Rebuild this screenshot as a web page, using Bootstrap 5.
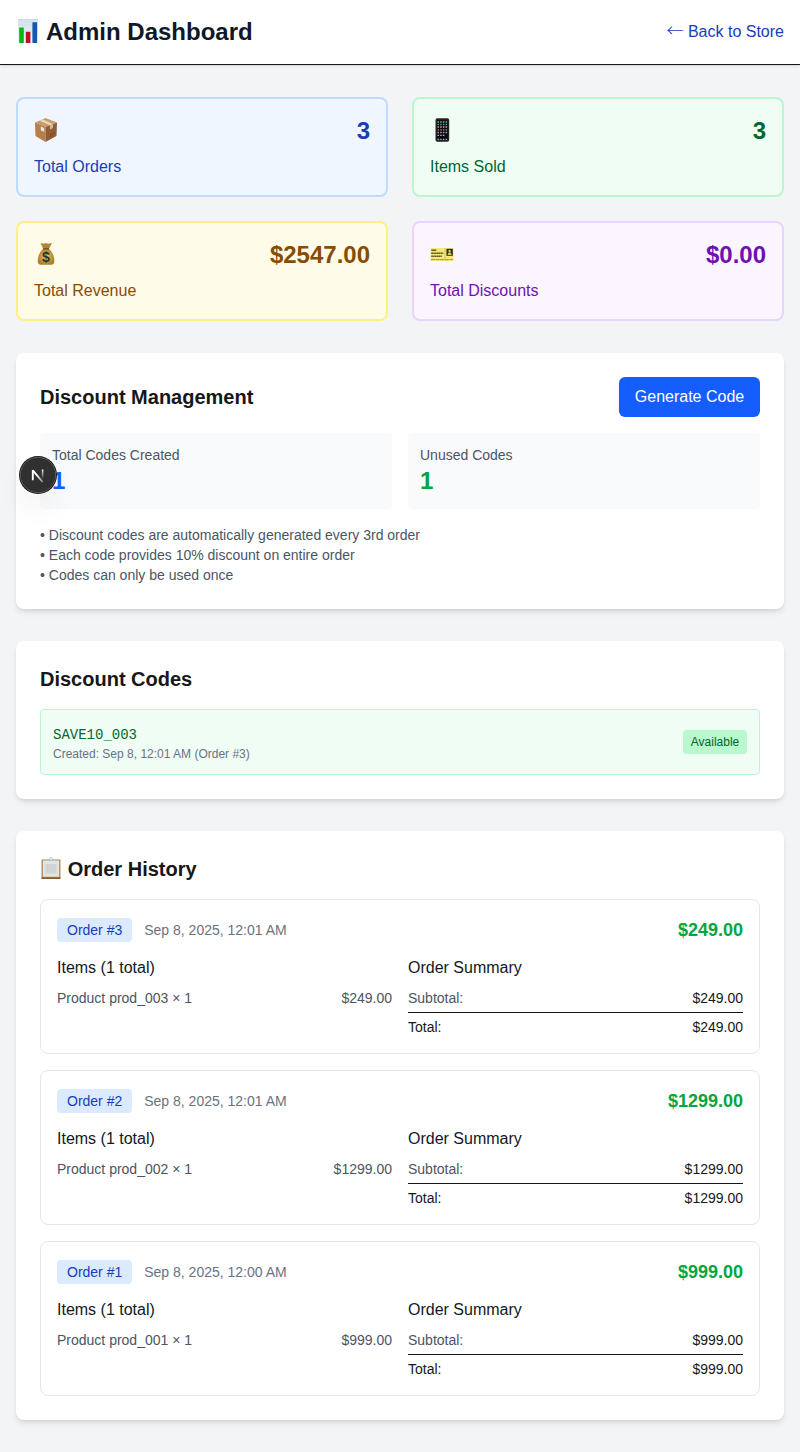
<!DOCTYPE html>
<html lang="en">
<head>
<meta charset="utf-8">
<meta name="viewport" content="width=device-width, initial-scale=1">
<title>Admin Dashboard</title>
<link href="https://cdn.jsdelivr.net/npm/bootstrap@5.3.0/dist/css/bootstrap.min.css" rel="stylesheet">
<style>
body{font-family:"Liberation Sans",Arial,sans-serif;font-size:16px;line-height:24px;background:#f3f4f6;color:#171717}
h1,h2,h3{margin:0;font-weight:700}
h1{font-size:24px;line-height:32px;color:#101828}
h2{font-size:20px;line-height:28px}
h3{font-size:16px;line-height:24px;font-weight:400;color:#101828}
.topbar{height:65px;border-bottom:1px solid #171717;box-shadow:0 1px 3px rgba(0,0,0,.1),0 1px 2px -1px rgba(0,0,0,.1)}
.back-link{color:#193cb8}
.back-arrow{font-family:"Noto Sans CJK JP",sans-serif;font-size:17px;font-weight:300;line-height:1}
.page-main{padding:32px 16px}
.stack-lg{gap:32px}
.stat{border:2px solid;border-radius:8px;padding:16px}
.stat svg,.topbar h1 svg{margin-bottom:2px}
.stat-value{font-size:24px;line-height:32px;font-weight:700}
.stat-blue{background:#eff6ff;border-color:#bedbff;color:#193cb8}
.stat-green{background:#f0fdf4;border-color:#b9f8cf;color:#016630}
.stat-yellow{background:#fefce8;border-color:#fff085;color:#894b00}
.stat-purple{background:#faf5ff;border-color:#e9d4ff;color:#6e11b0}
.panel{background:#fff;border-radius:8px;padding:24px;box-shadow:0 4px 6px -1px rgba(0,0,0,.1),0 2px 4px -2px rgba(0,0,0,.1)}
.btn-generate{--bs-btn-bg:#155dfc;--bs-btn-color:#fff;--bs-btn-hover-bg:#1447e6;--bs-btn-hover-color:#fff;--bs-btn-padding-x:0;--bs-btn-padding-y:8px;--bs-btn-border-width:0;--bs-btn-border-radius:6px;--bs-btn-font-size:16px;line-height:24px;width:141px;white-space:nowrap}
.metric{background:#f9fafb;border-radius:4px;padding:12px}
.text-sm14{font-size:14px;line-height:20px}
.text-xs12{font-size:12px;line-height:16px}
.c-slate{color:#4a5565}.c-muted{color:#6a7282}.c-green{color:#00a63e}.c-blue{color:#155dfc}
.code-row{background:#f0fdf4;border:1px solid #b9f8cf;border-radius:4px;padding:12px}
.code-name{font-family:"Liberation Mono",monospace;font-size:14px;line-height:22px;padding-top:2px;color:#016630}
.pill-ok{background:#b9f8cf;color:#016630;border-radius:4px;padding:4px 0;width:64px;text-align:center}
.order{border:1px solid #e5e7eb;border-radius:8px;padding:16px}
.order-head{margin-bottom:12px}
.order-no{background:#dbeafe;color:#193cb8;border-radius:4px;padding:2px 10px}
.order-sum{font-size:18px;line-height:28px;font-weight:700}
.total-line{border-top:1px solid #171717;padding-top:4px;margin-top:4px}
.dev-badge{position:fixed;left:19px;top:456px;width:38px;height:38px;border-radius:50%;box-shadow:0 16px 32px -8px rgba(0,0,0,.14)}
svg{display:block;flex:none}
</style>
</head>
<body>
<header class="topbar bg-white d-flex align-items-center justify-content-between px-3">
  <h1 class="d-flex align-items-center">
    <svg class="me-2" width="22" height="24" viewBox="0 0 22 24"><defs><linearGradient id="sky" x2="0" y2="1"><stop stop-color="#d3e0ed"/><stop offset="1" stop-color="#f4f7fa"/></linearGradient></defs><path fill="url(#sky)" d="M2 0h20v24H2z"/><path d="M2 .5h20M2 6h20M2 12h20" stroke="#c7d5e3" stroke-width=".5"/><path fill="#08b514" d="M3.200 8.500h4.600V24H3.200z"/><path fill="#bd1220" d="M9.800 12.800h4.600V24H9.800z"/><path fill="#1459b8" d="M16.400 3.200h4.700V24h-4.700z"/></svg>
    <span>Admin Dashboard</span></h1>
  <a class="back-link text-decoration-none" href="#"><span class="back-arrow">←</span> Back to Store</a>
</header>
<main class="page-main d-flex flex-column stack-lg">
  <section class="row g-4">
    <div class="col-6"><div class="stat stat-blue">
      <div class="d-flex justify-content-between align-items-center mb-2">
        <svg width="24" height="24" viewBox="0 0 24 24"><path fill="#b77d4b" d="m1 4.500 10.500 4.300V24L1.500 18z"/><path fill="#925d34" d="M11.500 8.800 23 4.500 22.500 18l-11 6z"/><path fill="#c99b6c" d="M1 4.500 11.500 0 23 4.500 11.500 9z"/><path fill="#e8d5b9" d="m5.500 2.700 3-1.400 10.500 4.800-3 1.200z"/><path fill="#d5b58e" d="m16 7.300 3-1.200v4l-3 1.400z"/><path fill="#e6e5df" d="m6.800 8.500 3.400 1.500v4l-3.400-1.700z"/><path d="m16 17 5-2.400m-4.500 4 2-1" stroke="#62401f" stroke-width=".8"/></svg>
        <span class="stat-value">3</span></div>
      <div>Total Orders</div></div></div>
    <div class="col-6"><div class="stat stat-green">
      <div class="d-flex justify-content-between align-items-center mb-2">
        <svg width="24" height="24" viewBox="0 0 24 24"><rect x="5.500" y=".2" width="13.700" height="23.600" rx="1.800" fill="#222"/><path fill="#090a0e" d="M7 2.400h10.700v19H7z"/><g stroke-width="1.300" stroke-dasharray="1.500 1.200"><path stroke="#6bc579" d="M7.500 4h10"/><path stroke="#3a9bd4" d="M7.500 6.500h10"/><path stroke="#e6ad69" d="M7.500 9h10"/><path stroke="#db7950" d="M7.500 11.800h10"/><path stroke="#a89bc4" d="M7.500 14.500h10"/><path stroke="#b8b6a7" d="M7.500 17.300h8"/><path stroke="#5cc7c2" d="M7.500 21.300h10"/></g></svg>
        <span class="stat-value">3</span></div>
      <div>Items Sold</div></div></div>
    <div class="col-6"><div class="stat stat-yellow">
      <div class="d-flex justify-content-between align-items-center mb-2">
        <svg width="24" height="24" viewBox="0 0 24 24"><defs><radialGradient id="gold"><stop stop-color="#edcb5f"/><stop offset="1" stop-color="#ad802d"/></radialGradient></defs><path fill="#b38336" d="m6.500 1 3.500.8L12 1l2 .8 4-.8-3.200 6H9.300z"/><path fill="url(#gold)" d="M9.500 6.500h5C18 9.500 20.700 14 20.300 20q-.4 2.700-3 2.700H7Q4 22.700 3.800 20C3.500 14 6 9.500 9.500 6.500z"/><path d="M9 6.800h6" stroke="#754b20" stroke-width="1.300"/><text x="12" y="19.700" text-anchor="middle" font-family="Liberation Sans" font-weight="700" font-size="14" fill="#292f35">$</text></svg>
        <span class="stat-value">$2547.00</span></div>
      <div>Total Revenue</div></div></div>
    <div class="col-6"><div class="stat stat-purple">
      <div class="d-flex justify-content-between align-items-center mb-2">
        <svg width="24" height="24" viewBox="0 0 24 24"><path fill="#f6e875" d="M.5 6h23v13H.5z"/><g stroke="#59552b" stroke-width="1.400"><path d="M1.300 8.200h5"/><path d="M1.300 11.200h12" stroke-dasharray="1.600 .3"/><path d="M1.300 14.200h10.500" stroke-dasharray="1.600 .3"/></g><path stroke="#a0964a" stroke-width="1" stroke-dasharray="4 .6" d="M1 17.600h22"/><path stroke="#b6ab58" stroke-width=".6" d="M15 6v13"/><path fill="#29291d" d="M16.500 6.800h6.300v7h-6.300z"/><circle cx="19.600" cy="9" r="1.200" fill="#d6ca68"/><path fill="#d6ca68" d="m17.500 13 1-2.500h2.200l1 2.500z"/></svg>
        <span class="stat-value">$0.00</span></div>
      <div>Total Discounts</div></div></div>
  </section>

  <section class="panel">
    <div class="d-flex justify-content-between align-items-center mb-3">
      <h2>Discount Management</h2><button class="btn btn-generate" type="button">Generate Code</button></div>
    <div class="row gx-3 mb-3">
      <div class="col-6"><div class="metric"><div class="text-sm14 c-slate">Total Codes Created</div><div class="stat-value c-blue">1</div></div></div>
      <div class="col-6"><div class="metric"><div class="text-sm14 c-slate">Unused Codes</div><div class="stat-value c-green">1</div></div></div>
    </div>
    <div class="text-sm14 c-slate"><div>• Discount codes are automatically generated every 3rd order</div><div>• Each code provides 10% discount on entire order</div><div>• Codes can only be used once</div></div>
  </section>

  <section class="panel">
    <h2 class="mb-3">Discount Codes</h2>
    <div class="code-row d-flex justify-content-between align-items-center">
      <div><div class="code-name">SAVE10_003</div><div class="text-xs12 c-muted">Created: Sep 8, 12:01 AM (Order #3)</div></div>
      <span class="pill-ok text-xs12">Available</span>
    </div>
  </section>

  <section class="panel">
    <h2 class="d-flex align-items-center mb-3">
      <svg width="22" height="24" viewBox="0 0 22 24" class="me-1"><path fill="#b58a5c" d="M1.500 2.500h19V21h-19z"/><path fill="#87602f" d="M1.500 20.300h19v1.700h-19z"/><path fill="#e2e4e4" d="M2.900 3.500h16.200v16.300H2.900z"/><path fill="#d1d4d5" d="M5.500 7h11v9.500h-11z"/><path fill="#b9c3cc" d="M5.500 4V2.200H9Q9 .2 11 .2t2 2h3.500V4z"/><circle cx="11" cy="1.900" r=".8" fill="#fff"/></svg>
      <span>&#8202;Order History</span></h2>
    <div class="d-flex flex-column gap-3">
      <article class="order">
        <div class="d-flex justify-content-between align-items-center order-head"><div class="d-flex align-items-center text-sm14"><span class="order-no me-2">Order #3</span><span class="c-muted ms-1">Sep 8, 2025, 12:01 AM</span></div><span class="order-sum c-green">$249.00</span></div>
        <div class="row gx-3">
          <div class="col-6"><h3 class="mb-2">Items (1 total)</h3><div class="d-flex justify-content-between text-sm14 c-slate"><span>Product prod_003 × 1</span><span>$249.00</span></div></div>
          <div class="col-6"><h3 class="mb-2">Order Summary</h3><div class="d-flex justify-content-between text-sm14"><span class="c-slate">Subtotal:</span><span>$249.00</span></div><div class="d-flex justify-content-between text-sm14 total-line"><span>Total:</span><span>$249.00</span></div></div>
        </div>
      </article>
      <article class="order">
        <div class="d-flex justify-content-between align-items-center order-head"><div class="d-flex align-items-center text-sm14"><span class="order-no me-2">Order #2</span><span class="c-muted ms-1">Sep 8, 2025, 12:01 AM</span></div><span class="order-sum c-green">$1299.00</span></div>
        <div class="row gx-3">
          <div class="col-6"><h3 class="mb-2">Items (1 total)</h3><div class="d-flex justify-content-between text-sm14 c-slate"><span>Product prod_002 × 1</span><span>$1299.00</span></div></div>
          <div class="col-6"><h3 class="mb-2">Order Summary</h3><div class="d-flex justify-content-between text-sm14"><span class="c-slate">Subtotal:</span><span>$1299.00</span></div><div class="d-flex justify-content-between text-sm14 total-line"><span>Total:</span><span>$1299.00</span></div></div>
        </div>
      </article>
      <article class="order">
        <div class="d-flex justify-content-between align-items-center order-head"><div class="d-flex align-items-center text-sm14"><span class="order-no me-2">Order #1</span><span class="c-muted ms-1">Sep 8, 2025, 12:00 AM</span></div><span class="order-sum c-green">$999.00</span></div>
        <div class="row gx-3">
          <div class="col-6"><h3 class="mb-2">Items (1 total)</h3><div class="d-flex justify-content-between text-sm14 c-slate"><span>Product prod_001 × 1</span><span>$999.00</span></div></div>
          <div class="col-6"><h3 class="mb-2">Order Summary</h3><div class="d-flex justify-content-between text-sm14"><span class="c-slate">Subtotal:</span><span>$999.00</span></div><div class="d-flex justify-content-between text-sm14 total-line"><span>Total:</span><span>$999.00</span></div></div>
        </div>
      </article>
    </div>
  </section>
</main>
<div class="dev-badge"><svg width="38" height="38" viewBox="0 0 38 38"><defs><linearGradient id="nfade" x1="0" y1="13" x2="0" y2="23" gradientUnits="userSpaceOnUse"><stop stop-color="#fff"/><stop offset="1" stop-color="#fff" stop-opacity="0"/></linearGradient><linearGradient id="ndiag" x1="18" y1="19" x2="24.500" y2="26.500" gradientUnits="userSpaceOnUse"><stop stop-color="#fff"/><stop offset="1" stop-color="#fff" stop-opacity=".35"/></linearGradient></defs><circle cx="19" cy="19" r="19" fill="#171717"/><circle cx="19" cy="19" r="17.700" fill="#303030" stroke="#737373" stroke-width=".7"/><path d="M13.800 24.300V14.300l9.800 11.700" fill="none" stroke="url(#ndiag)" stroke-width="1.900" stroke-linejoin="bevel"/><path d="M22.800 13.500h1.600v10h-1.600z" fill="url(#nfade)"/></svg></div>
<script src="https://cdn.jsdelivr.net/npm/bootstrap@5.3.0/dist/js/bootstrap.bundle.min.js"></script>
</body>
</html>
